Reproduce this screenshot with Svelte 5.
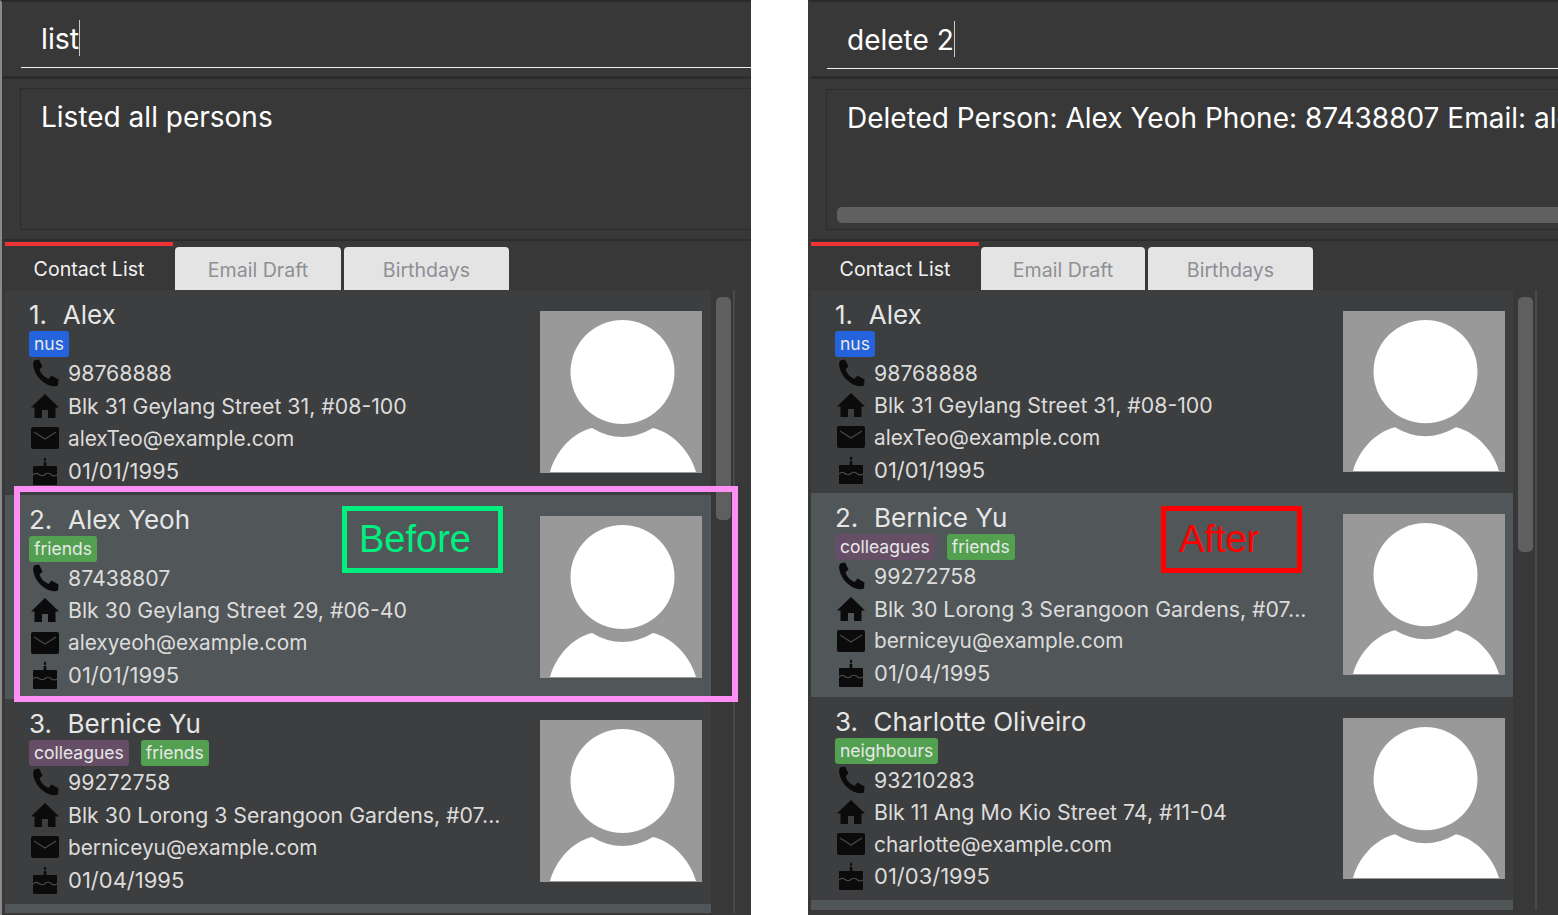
<script>
	const alex = { name: 'Alex', tags: [['nus', 'blue']], phone: '98768888', address: 'Blk 31 Geylang Street 31, #08-100', email: 'alexTeo@example.com', birthday: '01/01/1995' };
	const yeoh = { name: 'Alex Yeoh', tags: [['friends', 'green']], phone: '87438807', address: 'Blk 30 Geylang Street 29, #06-40', email: 'alexyeoh@example.com', birthday: '01/01/1995' };
	const bernice = { name: 'Bernice Yu', tags: [['colleagues', 'purple'], ['friends', 'green']], phone: '99272758', address: 'Blk 30 Lorong 3 Serangoon Gardens, #07...', email: 'berniceyu@example.com', birthday: '01/04/1995' };
	const charlotte = { name: 'Charlotte Oliveiro', tags: [['neighbours', 'green']], phone: '93210283', address: 'Blk 11 Ang Mo Kio Street 74, #11-04', email: 'charlotte@example.com', birthday: '01/03/1995' };

	const panels = [
		{ id: 'before', command: 'list', result: 'Listed all persons', contacts: [alex, yeoh, bernice] },
		{ id: 'after', command: 'delete 2', result: 'Deleted Person: Alex Yeoh Phone: 87438807 Email: alexyeoh@example.com', contacts: [alex, bernice, charlotte] }
	];
</script>

<div class="page">
	{#each panels as panel}
		<section class="panel {panel.id}">
			<div class="command">
				<div class="command-line">{panel.command}<span class="caret"></span></div>
			</div>
			<div class="result-wrap">
				<div class="result">
					<p>{panel.result}</p>
					{#if panel.id === 'after'}
						<div class="hbar"></div>
					{/if}
				</div>
			</div>
			<div class="tabs">
				<div class="tab active">Contact List</div>
				<div class="tab">Email Draft</div>
				<div class="tab last">Birthdays</div>
			</div>
			<div class="list-area">
				<div class="list">
					{#each panel.contacts as person, i}
						<article class="row" class:even={i % 2 === 1}>
							<div class="info">
								<div class="name"><span class="index">{i + 1}.&nbsp;&nbsp;</span>{person.name}</div>
								<div class="tags">
									{#each person.tags as tag}
										<span class="tag {tag[1]}">{tag[0]}</span>
									{/each}
								</div>
								<div class="line">
									<svg viewBox="0 0 28 28"><path d="M3 1.5 L8 0.5 L11.5 7.5 L8.5 10.5 C10 15 13 18 17.5 20 L20.5 16.5 L27.5 20.5 L27 26.5 C25 27.5 22 27.5 19 26.5 C10 23.5 3 15 2 5 Z" /></svg>
									<span>{person.phone}</span>
								</div>
								<div class="line">
									<svg viewBox="0 0 28 28"><path d="M14 2 L28 15.5 L24.5 15.5 L24.5 26 L17 26 L17 18 L11 18 L11 26 L3.5 26 L3.5 15.5 L0 15.5 Z" /></svg>
									<span>{person.address}</span>
								</div>
								<div class="line email">
									<svg viewBox="0 0 28 28">
										<rect x="0" y="3" width="28" height="22" rx="2" />
										<path class="flap" d="M3 8 L14 15 L25 8" />
									</svg>
									<span>{person.email}</span>
								</div>
								<div class="line date">
									<svg viewBox="0 0 28 28">
										<path d="M14 0 C15.5 2 15.5 3.5 14 4.5 C12.5 3.5 12.5 2 14 0 Z" />
										<rect x="12.7" y="5" width="2.6" height="5" />
										<rect x="2" y="9" width="24" height="19" rx="1" />
										<path class="flap" d="M2 18 Q5 15 8 17.5 Q11 20 14 17.5 Q17 15 20 17.5 Q23 20 26 18" />
									</svg>
									<span>{person.birthday}</span>
								</div>
							</div>
							<svg class="avatar" viewBox="0 0 162 162" preserveAspectRatio="none">
								<rect width="162" height="162" fill="#999999" />
								<circle cx="82.5" cy="61" r="52" fill="#ffffff" />
								<path d="M10 161 C16 140 32 122 52 117 Q82 135 113 117 C133 122 150 140 156 161 Z" fill="#ffffff" />
							</svg>
						</article>
					{/each}
					<div class="row even"></div>
				</div>
				<div class="track"><div class="thumb"></div></div>
			</div>
			{#if panel.id === 'before'}
				<div class="highlight"></div>
				<div class="note note-before">Before</div>
			{:else}
				<div class="note note-after">After</div>
			{/if}
		</section>
	{/each}
</div>

<style>
	:global(body) {
		margin: 0;
		background: #ffffff;
	}

	.page {
		display: flex;
		gap: 57px;
		width: 1558px;
		height: 915px;
		overflow: hidden;
		font-family: Inter, 'Liberation Sans', sans-serif;
	}

	.panel {
		position: relative;
		width: 751px;
		height: 915px;
		flex: none;
		overflow: hidden;
		box-sizing: border-box;
		display: flex;
		flex-direction: column;
		background: #383838;
		border-top: 2px solid #2a2a2a;
	}

	.before {
		border-left: 2px solid #8a8a8a;
		--row: 204.5px;
		--line: 32.5px;
		--tab-left: 3px;
		--list-width: 706px;
	}

	.after {
		width: 750px;
		border-left: 3px solid #383838;
		--row: 203.4px;
		--line: 32.2px;
		--tab-left: 0px;
		--list-width: 702px;
	}

	/* Command box */
	.command {
		height: 77px;
		box-sizing: border-box;
		padding-left: 19px;
		border-bottom: 3px solid #2c2c2c;
	}

	.after .command {
		padding-left: 16px;
	}

	.command-line {
		height: 66px;
		box-sizing: border-box;
		padding: 18px 0 0 20px;
		border-bottom: 1px solid #f0f0f0;
		color: #ffffff;
		font-size: 28.5px;
		line-height: 38px;
	}

	.after .command-line {
		height: 67px;
		font-size: 28px;
		padding-top: 19px;
	}

	.caret {
		display: inline-block;
		width: 1px;
		height: 36px;
		background: #c8c8c8;
		vertical-align: top;
	}

	/* Result box */
	.result-wrap {
		height: 162px;
		box-sizing: border-box;
		padding: 9px 0 0 18px;
		border-bottom: 2px solid #2c2c2c;
	}

	.after .result-wrap {
		padding-top: 10px;
		padding-left: 15px;
	}

	.result {
		position: relative;
		width: 800px;
		height: 142px;
		box-sizing: border-box;
		border: 1px solid #2c2c2c;
		padding: 12px 20px;
	}

	.after .result {
		height: 141px;
	}

	.result p {
		margin: 0;
		color: #ffffff;
		font-size: 28px;
		line-height: 32px;
		white-space: nowrap;
	}

	.hbar {
		position: absolute;
		left: 10px;
		right: 0;
		bottom: 6px;
		height: 16px;
		border-radius: 5px;
		background: #606060;
	}

	/* Tabs */
	.tabs {
		display: flex;
		height: 49px;
		padding-left: var(--tab-left);
	}

	.tab {
		width: 166px;
		height: 43px;
		margin-top: 6px;
		margin-right: 3px;
		border-radius: 4px 4px 0 0;
		background: #e4e4e4;
		color: #8f8f94;
		font-size: 19.6px;
		line-height: 47px;
		text-align: center;
	}

	.after .tab {
		width: 164px;
	}

	.tab.last {
		width: 165px;
	}

	.after .tab.last {
		width: 165px;
	}

	.tab.active,
	.after .tab.active {
		width: 168px;
		height: 45px;
		margin: 1px 2px 0 0;
		border-top: 4px solid #ee3333;
		border-radius: 0;
		background: #383838;
		color: #f2f2f2;
	}

	/* Contact list */
	.list-area {
		display: flex;
		flex: 1;
		min-height: 0;
		padding-left: var(--tab-left);
		padding-bottom: 2px;
	}

	.after .list-area {
		padding-bottom: 5px;
	}

	.list {
		width: var(--list-width);
		background: #3c3e3f;
		overflow: hidden;
	}

	.row {
		display: flex;
		justify-content: space-between;
		height: var(--row);
		box-sizing: border-box;
		padding: 21px 9px 0 24px;
		background: #3c3e3f;
	}

	.after .row {
		padding-right: 8px;
	}

	.row.even {
		background: #515658;
	}

	.info {
		margin-top: -11px;
	}

	.name {
		height: 30px;
		color: #e6e6e6;
		font-size: 26px;
		line-height: 30px;
		white-space: nowrap;
	}

	.index {
		margin-right: 1px;
	}

	.tags {
		display: flex;
		gap: 12px;
		height: 26px;
		margin: 1px 0 0;
	}

	.tag {
		height: 26px;
		padding: 0 5px;
		border-radius: 3px;
		color: #e8e8e8;
		font-size: 17.5px;
		line-height: 25px;
	}

	.blue {
		background: #2563dd;
	}

	.green {
		background: #53a050;
	}

	.purple {
		background: #664f66;
	}

	.line {
		display: flex;
		align-items: center;
		gap: 9px;
		height: var(--line);
		padding-left: 2px;
		color: #dcdcdc;
		font-size: 21.3px;
		white-space: nowrap;
	}

	.line.email {
		font-size: 20.8px;
	}

	.line.date {
		font-size: 22px;
	}

	.line svg {
		width: 28px;
		height: 28px;
		flex: none;
		fill: #0b0b0b;
	}

	.line svg .flap {
		fill: none;
		stroke: #4a4a4a;
		stroke-width: 1.2;
	}

	.avatar {
		width: 162px;
		height: 162px;
		flex: none;
	}

	.after .avatar {
		height: 161px;
	}

	.track {
		position: relative;
		width: 22px;
		border-right: 2px solid #4a4a4a;
		background: #383838;
	}

	.thumb {
		position: absolute;
		top: 7px;
		left: 5px;
		width: 15px;
		height: 223px;
		border-radius: 5px;
		background: #5f5f5f;
	}

	.after .thumb {
		height: 255px;
	}

	/* Annotations drawn over the screenshot */
	.highlight {
		position: absolute;
		left: 12px;
		top: 484px;
		width: 724px;
		height: 216px;
		box-sizing: border-box;
		border: 6px solid #ff8ef5;
	}

	.note {
		position: absolute;
		top: 504px;
		height: 67px;
		box-sizing: border-box;
		border-width: 5px;
		border-style: solid;
		font-family: 'Liberation Sans', sans-serif;
		font-size: 38px;
		line-height: 57px;
	}

	.note-before {
		left: 340px;
		width: 161px;
		padding-left: 12px;
		border-color: #00f080;
		color: #00f080;
	}

	.note-after {
		left: 350px;
		width: 141px;
		padding-left: 13px;
		border-color: #fe0000;
		color: #fe0000;
	}
</style>
